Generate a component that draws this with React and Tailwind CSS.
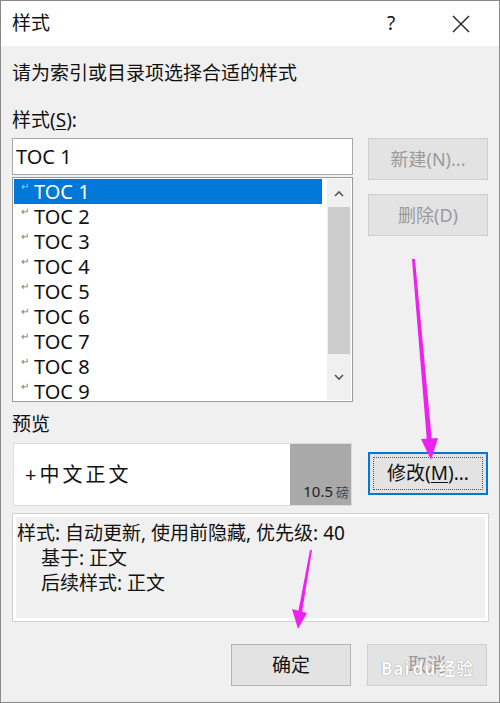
import React from 'react';

const font = { fontFamily: '"Noto Sans", "Noto Sans CJK SC", sans-serif' };

const tocs = ['TOC 1', 'TOC 2', 'TOC 3', 'TOC 4', 'TOC 5', 'TOC 6', 'TOC 7', 'TOC 8', 'TOC 9'];

const Btn = ({ children, disabled, className = '' }) => (
    <div
        className={`w-[120px] h-[42px] flex items-center justify-center border text-[18px] ${
            disabled ? 'bg-[#e3e3e3] border-[#cfcfcf] text-[#9a9a9a]' : 'bg-[#e3e3e3] border-[#b4b4b4] text-[#111]'
        } ${className}`}
    >
        {children}
    </div>
);

const App = () => {
    return (
        <div style={font} className="relative w-[500px] h-[703px] border border-[#8a8a8a] bg-[#f0f0f0] text-[#111] overflow-hidden">
            {/* title bar */}
            <div className="h-[45px] bg-white flex items-center pl-[11px]">
                <span className="text-[19px]">样式</span>
                <span className="ml-auto w-[24px] text-center text-[19px] mr-[49px]">?</span>
                <svg width="18" height="18" viewBox="0 0 18 18" className="mr-[29px]">
                    <path d="M1 1 L17 17 M17 1 L1 17" stroke="#222" strokeWidth="1.4" />
                </svg>
            </div>

            <div className="px-[11px]">
                <div className="mt-[15px] h-[24px] leading-[24px] text-[19px]">请为索引或目录项选择合适的样式</div>
                <div className="mt-[23px] h-[24px] leading-[24px] text-[19px]">
                    样式(<span className="underline underline-offset-2">S</span>):
                </div>

                <div className="mt-[6px] flex gap-[15px]">
                    <div className="w-[342px]">
                        <div className="h-[37px] bg-white border border-[#a8a8a8] flex items-center pl-[3px] text-[20px]">TOC 1</div>
                        <div className="mt-[2px] h-[225px] bg-white border border-[#9a9a9a] flex p-[1px]">
                            <div className="flex-1">
                                {tocs.map((t, i) => (
                                    <div
                                        key={t}
                                        className={`h-[25px] flex items-center text-[20px] ${i === 0 ? 'bg-[#0078d7] text-white mr-[5px]' : ''}`}
                                    >
                                        <span className={`w-[20px] pl-[7px] -mt-[10px] text-[10px] ${i === 0 ? 'text-[#9ec8ee]' : 'text-[#777]'}`}>↵</span>
                                        <span>{t}</span>
                                    </div>
                                ))}
                            </div>
                            <div className="w-[24px] bg-[#f0f0f0] flex flex-col">
                                <div className="h-[28px] flex items-center justify-center">
                                    <svg width="10" height="7" viewBox="0 0 10 7">
                                        <path d="M1 6 L5 2 L9 6" fill="none" stroke="#555" strokeWidth="1.6" />
                                    </svg>
                                </div>
                                <div className="mx-[1px] h-[147px] bg-[#cdcdcd]" />
                                <div className="flex-1 flex items-center justify-center">
                                    <svg width="10" height="7" viewBox="0 0 10 7">
                                        <path d="M1 1 L5 5 L9 1" fill="none" stroke="#555" strokeWidth="1.6" />
                                    </svg>
                                </div>
                            </div>
                        </div>
                    </div>
                    <div className="flex flex-col gap-[14px]">
                        <Btn disabled>新建(N)...</Btn>
                        <Btn disabled>删除(D)</Btn>
                    </div>
                </div>

                <div className="mt-[10px] h-[24px] leading-[24px] text-[19px]">预览</div>

                <div className="mt-[7px] flex gap-[16px]">
                    <div className="ml-[1px] w-[339px] h-[63px] border border-[#dcdcdc] bg-white flex">
                        <div className="flex-1 flex items-center pl-[11px] text-[20px] tracking-[3px]">+中文正文</div>
                        <div className="w-[61px] bg-[#a9a9a9] flex items-end justify-end pr-[2px] pb-[3px] text-[15px] text-[#222]">
                            10.5 <span className="ml-[3px] text-[13px] text-[#444]">磅</span>
                        </div>
                    </div>
                    <div className="mt-[9px] w-[120px] h-[43px] border-2 border-[#0078d7] bg-[#e3e3e3] p-[3px]">
                        <div className="w-full h-full border border-dotted border-[#555] flex items-center justify-center text-[19px]">
                            修改(<span className="underline underline-offset-2">M</span>)...
                        </div>
                    </div>
                </div>

                <div className="mt-[7px] w-[477px] h-[109px] border border-[#d2d2d2] p-[3px] bg-white">
                    <div className="w-full h-full bg-[#f0f0f0] text-[19px] leading-[25px] pl-[1px] pt-[4px]">
                        <div>样式: 自动更新, 使用前隐藏, 优先级: 40</div>
                        <div className="pl-[24px]">基于: 正文</div>
                        <div className="pl-[24px]">后续样式: 正文</div>
                    </div>
                </div>

                <div className="mt-[22px] flex justify-end gap-[16px] pr-[1px]">
                    <Btn className="text-[19px]">确定</Btn>
                    <div className="relative">
                        <Btn disabled className="text-[19px]">取消</Btn>
                        <div
                            className="absolute left-[14px] top-[12px] text-[17px] font-bold text-white tracking-[1px] opacity-90"
                            style={{ textShadow: '0 0 1px #666' }}
                        >
                            Bai<span className="mx-[2px]">du</span>经验
                        </div>
                    </div>
                </div>
            </div>

            {/* annotation arrows */}
            <svg className="absolute left-0 top-0 pointer-events-none" width="500" height="703">
                <path d="M411 258 L414 258 L431 441 L426 441 Z" fill="#ee22ee" />
                <path d="M420 438 L437 437 L430 459 Z" fill="#ee22ee" />
                <path d="M309 549 L311 549 L301 612 L297 612 Z" fill="#ee22ee" />
                <path d="M291 608 L306 612 L297 628 Z" fill="#ee22ee" />
            </svg>
        </div>
    );
};

export default App;
